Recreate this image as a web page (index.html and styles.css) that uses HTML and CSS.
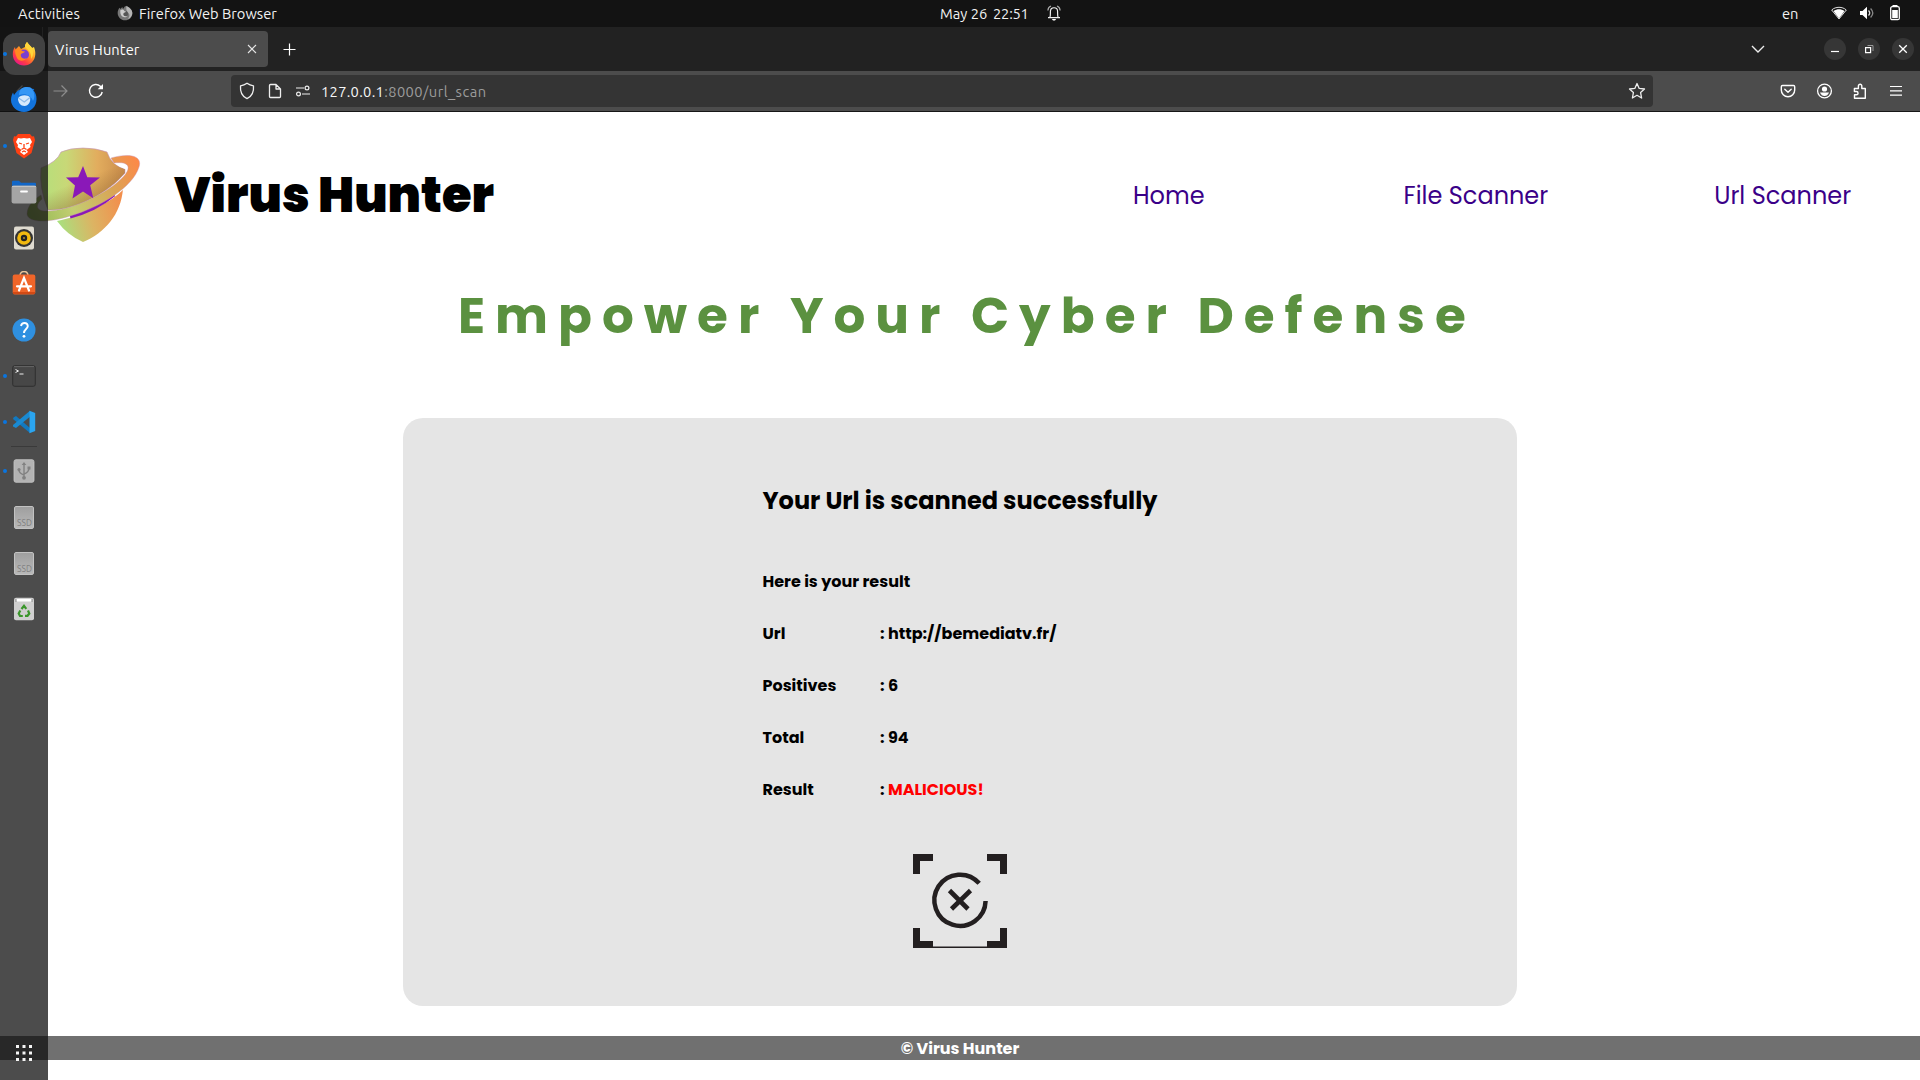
FILE: index.html
```html
<!DOCTYPE html>
<html lang="en">
<head>
<meta charset="utf-8">
<title>Virus Hunter</title>
<link rel="stylesheet" href="styles.css">
</head>
<body>
<div class="screen">
  <header class="topbar">
    <div class="topbar-left">
      <span class="activities">Activities</span>
      <svg class="mono-fox" width="16" height="16" viewBox="0 0 24 24"><path fill="#777" d="M12 2c4 0 10 3 11 10 0 7-5 11-11 11S1 18 1 12c0-3 1-6 3-8l1 2 3-3 1 3z"/><path fill="#b5b5b5" d="M14 1c5 3 9 6 9 11 0 4-3 8-7 9 5-5 2-9-1-10l-1-5z"/><circle cx="12" cy="13" r="4.5" fill="#555"/><path fill="#ccc" d="M5 8c3-2 5-1 6 1l3 1-4 2c-2 4 2 6 6 4-4 5-12 2-11-8z"/></svg>
      <span>Firefox Web Browser</span>
    </div>
    <div class="topbar-clock">
      <span>May 26</span><span>22:51</span>
      <svg width="14" height="16" viewBox="0 0 14 16" fill="none" stroke="#eee" stroke-width="1.2"><path d="M1 12.600H13M2.800 12.400C3.600 11 3.400 9 3.400 6.400C3.400 1.500 10.600 1.500 10.600 6.400C10.600 9 10.400 11 11.200 12.400"/><path d="M4 1C2.200 1.600 1 3.200.9 5.500M10 1C11.800 1.600 13 3.200 13.100 5.500" opacity=".7"/><path d="M4.800 14h4.400l-1.200 1.600H6z" fill="#fff" stroke="none"/></svg>
    </div>
    <div class="topbar-status">
      <span class="lang">en</span>
      <svg width="16" height="14" viewBox="0 0 16 14"><path d="M.7 4C4.500.4 11.500.4 15.300 4L8 13z" fill="none" stroke="#ddd"/><path d="M2.500 5C6 2.800 10 2.800 13.500 5L8 12.400z" fill="#fff"/></svg>
      <svg width="16" height="14" viewBox="0 0 16 14"><path d="M1 5h2.500L8 .8v12.400L3.500 9H1z" fill="#fff"/><path d="M9.500 4.500q2.400 2.500 0 5" fill="none" stroke="#ddd" stroke-width="1.300"/><path d="M11.600 2.500q4.400 4.500 0 9" fill="none" stroke="#888" stroke-width="1.300"/></svg>
      <svg width="12" height="16" viewBox="0 0 12 16"><path d="M3.500 0h5v2h-5z" fill="#fff"/><rect x="1.700" y="1.700" width="8.600" height="13" rx="1.500" fill="none" stroke="#fff" stroke-width="1.300"/><path d="M3.200 5h5.600v8.200H3.200z" fill="#fff"/></svg>
    </div>
  </header>

  <div class="tabbar">
    <svg class="view-icon" width="14" height="12" viewBox="0 0 14 12" fill="none" stroke="#ddd" stroke-width="1.300"><path d="M2 1h10M1 11V5q0-1.500 1.500-1.500h9Q13 3.500 13 5v6z"/></svg>
    <i class="divider"></i>
    <div class="tab">
      <span>Virus Hunter</span>
      <svg width="10" height="10" viewBox="0 0 10 10" stroke="#e5e5e5" stroke-width="1.100"><path d="M1 1l8 8M9 1L1 9"/></svg>
    </div>
    <svg class="plus" width="13" height="13" viewBox="0 0 13 13" stroke="#fff" stroke-width="1.200"><path d="M6.500.500v12M.500 6.500h12"/></svg>
    <svg class="tabs-chevron" width="14" height="8" viewBox="0 0 14 8" fill="none" stroke="#eee" stroke-width="1.400"><path d="M1 1l6 6 6-6"/></svg>
    <div class="window-buttons">
      <span class="wbtn"><svg width="10" height="10" viewBox="0 0 10 10" stroke="#fff" stroke-width="1.200"><path d="M1 7.500h8"/></svg></span>
      <span class="wbtn"><svg width="10" height="10" viewBox="0 0 10 10" fill="none" stroke="#fff" stroke-width="1.200"><path d="M1.600 3.600h5v5h-5z"/><path d="M3.500 1.500h5.500v5.500" stroke="#999" stroke-width="1"/></svg></span>
      <span class="wbtn"><svg width="10" height="10" viewBox="0 0 10 10" stroke="#fff" stroke-width="1.300"><path d="M1.200 1.200l7.600 7.600M8.800 1.200L1.200 8.800"/></svg></span>
    </div>
  </div>

  <div class="toolbar">
    <svg class="back" width="15" height="12" viewBox="0 0 15 12" fill="none" stroke="#ddd" stroke-width="1.200"><path d="M14.500 6H1M6.500.5L1 6l5.500 5.500"/></svg>
    <svg class="forward" width="15" height="12" viewBox="0 0 15 12" fill="none" stroke="#8d8d8d" stroke-width="1.200"><path d="M.5 6H14M8.500.5L14 6l-5.500 5.500"/></svg>
    <svg class="reload" width="16" height="16" viewBox="0 0 16 16" fill="none" stroke="#fff" stroke-width="1.400"><path d="M14.200 9A6.400 6.400 0 1 1 12.300 3.200L14 5"/><path d="M15 1v5.300H9.700z" fill="#fff" stroke="none"/></svg>
    <div class="urlbar">
      <svg width="16" height="18" viewBox="0 0 16 18" fill="none" stroke="#eee" stroke-width="1.300" stroke-linejoin="round"><path d="M8 1.200C5.500 3 3.500 3.500 1.500 3.800 1 10 3 14.500 8 16.600 13 14.500 15 10 14.500 3.800 12.500 3.500 10.500 3 8 1.200z"/></svg>
      <svg class="page-icon" width="14" height="16" viewBox="0 0 14 16" fill="none" stroke="#eee" stroke-width="1.300" stroke-linejoin="round"><path d="M2.500 1.500H8L12.500 6v7.500q0 1-1 1h-9q-1 0-1-1v-11q0-1 1-1zM8 1.500V6h4.500"/></svg>
      <svg class="perm-icon" width="16" height="12" viewBox="0 0 16 12" fill="none" stroke="#eee" stroke-width="1.200"><path d="M1 3h8M7 9h8"/><circle cx="12" cy="3" r="1.900"/><circle cx="3.500" cy="9" r="1.900"/></svg>
      <span class="host">127.0.0.1</span><span class="path">:8000/url_scan</span>
      <svg class="star-icon" width="18" height="18" viewBox="0 0 18 18" fill="none" stroke="#eee" stroke-width="1.300" stroke-linejoin="round"><path d="M9 1.500l2.200 4.900 5.300.6-3.900 3.600 1 5.400L9 13.300 4.400 16l1-5.400L1.500 7l5.300-.6z"/></svg>
    </div>
    <div class="tools">
      <svg width="16" height="16" viewBox="0 0 16 16" fill="none" stroke="#fff" stroke-width="1.400" stroke-linecap="round" stroke-linejoin="round"><path d="M2.500 2.500h11q1.200 0 1.200 1.200V7a6.700 6.700 0 0 1-13.400 0V3.700q0-1.200 1.200-1.200z"/><path d="M4.800 6.200L8 9.200l3.200-3"/></svg>
      <svg width="17" height="16" viewBox="-.5 0 17 16"><circle cx="8" cy="8" r="6.900" fill="none" stroke="#fff" stroke-width="1.300"/><circle cx="8" cy="6" r="2.600" fill="#fff"/><path d="M3.500 9.500h9Q11 13 8 13T3.500 9.500z" fill="#fff"/></svg>
      <svg width="15" height="16" viewBox="1 0 15 16" fill="none" stroke="#fff" stroke-width="1.400" stroke-linejoin="round"><path d="M2.500 15.200h10.800V5.500H9.800V3a1.700 1.700 0 0 0-3.400 0v2.500h-4v3h2a1.600 1.600 0 0 1 0 3.300H2.500z"/></svg>
      <svg width="16" height="16" viewBox="0 0 16 16" stroke="#fff" stroke-width="1.200"><path d="M2 3.500h12M2 7.800h12M2 12.100h12"/></svg>
    </div>
  </div>

  <main class="page">
    <div class="site-header">
      <svg class="logo" width="116" height="98" viewBox="26 146 116 98">
        <defs>
          <linearGradient id="body" x1="40" x2="128" y1="190" y2="190" gradientUnits="userSpaceOnUse"><stop offset="0" stop-color="#b4e07c"/><stop offset=".3" stop-color="#c8d877"/><stop offset=".65" stop-color="#e2ad5e"/><stop offset="1" stop-color="#c98a4a"/></linearGradient>
          <linearGradient id="low" x1="58" y1="222" x2="122" y2="205" gradientUnits="userSpaceOnUse"><stop offset="0" stop-color="#a9e07f"/><stop offset=".5" stop-color="#dcb463"/><stop offset="1" stop-color="#f28f4d"/></linearGradient>
          <linearGradient id="ring" x1="27" y1="218" x2="140" y2="160" gradientUnits="userSpaceOnUse"><stop offset="0" stop-color="#8fb850"/><stop offset=".35" stop-color="#c3ce72"/><stop offset=".7" stop-color="#d9a556"/><stop offset="1" stop-color="#ff8747"/></linearGradient>
          <linearGradient id="shade" x1="75" y1="165" x2="92" y2="207" gradientUnits="userSpaceOnUse"><stop offset=".35" stop-color="#845c2c" stop-opacity="0"/><stop offset="1" stop-color="#845c2c" stop-opacity=".5"/></linearGradient>
        </defs>
        <path d="M57 221C82 216 108 205 123 189C121 214 105 233 83 242Q67 235 57 221z" fill="url(#low)"/>
        <path d="M57 218C82 213 108 203 123 188" fill="none" stroke="#fff" stroke-width="3"/>
        <path d="M70 216.500C86 212.500 102 204.500 114 194.500" fill="none" stroke="#8a18b8" stroke-width="4"/>
        <path d="M83 148Q70 148 61 152Q57 162 41 168Q39 188 48 210C75 211 108 193 125 173L125 169Q111 165 107 152Q96 148 83 148z" fill="url(#body)" stroke="#c590b5" stroke-width=".6"/>
        <path d="M83 148Q70 148 61 152Q57 162 41 168Q39 188 48 210C75 211 108 193 125 173L125 169Q111 165 107 152Q96 148 83 148z" fill="url(#shade)"/>
        <path d="M114 163C122 161 130 162 128 167L125 174Q127 169 125 169Q119 167 114 163z" fill="#fff"/>
        <path d="M111 158C128 153 143 155 139 167C133 187 101 207 70 216C48 223 28 223 27 214C27 206 34 199 41 195L42 199C35 205 36 211 46 211C72 211 110 192 124 176C131 168 130 161 114 163z" fill="url(#ring)" stroke="#c590b5" stroke-width=".4"/>
        <path d="M83 166l4.300 11.300 12.700.3-9.800 7.700 3.100 13-10.300-6.800-10.500 7 2.500-13-9-7.900 12.200-.3z" fill="#8a18b8"/>
      </svg>
      <h1 class="brand">Virus Hunter</h1>
      <nav class="nav"><a>Home</a><a>File Scanner</a><a>Url Scanner</a></nav>
    </div>
    <h2 class="slogan">Empower Your Cyber Defense</h2>
    <section class="card">
      <div class="result">
        <h3>Your Url is scanned successfully</h3>
        <p>Here is your result</p>
        <dl>
          <dt>Url</dt><dd>: http://bemediatv.fr/</dd>
          <dt>Positives</dt><dd>: 6</dd>
          <dt>Total</dt><dd>: 94</dd>
          <dt>Result</dt><dd>: <span class="verdict">MALICIOUS!</span></dd>
        </dl>
      </div>
      <svg class="scan-icon" width="94" height="94" viewBox="0 0 94 94" fill="none" stroke="#231f20"><path d="M3.500 20V3.500H20M74 3.500h16.500V20M3.500 74v16.500H20M74 90.500h16.500V74" stroke-width="7"/><path d="M20 93.300h54" stroke-width="1.400"/><path d="M66.200 29.300A25.600 25.600 0 1 0 72.600 47" stroke-width="4.500"/><path d="M36.500 36.500L55 55M57.500 36.500L38.500 55" stroke-width="4.600"/></svg>
    </section>
    <footer class="site-footer">© Virus Hunter</footer>
  </main>

  <aside class="dock">
    <div class="slot active running"><svg width="24" height="24" viewBox="0 0 24 24"><defs><linearGradient id="ff" x1="20" y1="2" x2="5" y2="22" gradientUnits="userSpaceOnUse"><stop offset="0" stop-color="#fff04a"/><stop offset=".4" stop-color="#ff9a1f"/><stop offset=".75" stop-color="#ff3b44"/><stop offset="1" stop-color="#e8168a"/></linearGradient></defs><path d="M15 0c2 3 4 4 5 6l2-1c1 3 1.500 5 1.300 7.500C23 19 18 23.500 12 23.500S.8 19 .8 12.500C.8 9 1.500 7 3 5l.5 2.500L7 4l2 3 4-2c0-2 .7-3.500 2-5z" fill="url(#ff)"/><circle cx="12" cy="12.500" r="5" fill="#7b3fd0"/><path d="M3 8c3-3 6-1 7 1l3 .5c-1 1.500-3 1.500-4 2.500-1 3 2 6 6 4-2 3-8 4-10 0-1-2-2-5-2-8z" fill="#ff8a20"/><path d="M15 0c2 3 4 4 5 6 2 4 1 9-1 11 1-5-2-9-6-12 0-2 .7-3.500 2-5z" fill="#ffd63a"/></svg></div>
    <div class="slot raised"><svg width="26" height="26" viewBox="0 0 26 26"><path d="M10 3c4-3 10-2 11 0 1-.5 2 0 2.500.5-.5 0-1 .5-1 1 2 2 3 5 3 8.500C25.500 20.500 20 26 13 26S0 20.500 0 14C0 11 1 8 2 6.500L3 9c2-3 4-5 7-6z" fill="#1273dc"/><path d="M10 3c4-3 10-2 11 0 3 4 3 9 1 12C20 9 14 7 8 9c0-2 .5-4 2-6z" fill="#3597f5"/><path d="M7 12.500c2-4 10-4 12-1 1 4-1.500 8.500-5.500 8.500S7 16.500 7 12.500z" fill="#d6e9fc"/><path d="M7.500 12l5.800 4 5.700-4.500" fill="none" stroke="#8fbbe8" stroke-width="1.300"/></svg></div>
    <div class="slot running"><svg width="24" height="26" viewBox="0 0 24 26"><path d="M6 1h12l2 2.500 2-.3L23 7l-1 4-2.500 9L12 25.500 4.500 20 2 11 1 7l1-3.800 2 .3z" fill="#ff4013"/><path d="M12 5l3 .5L18 5l2 4-2 3 .5 2-4 3 1.500 2-4 3-4-3 1.500-2-4-3 .5-2-2-3 2-4 3 .5z" fill="#fff"/><path d="M7 10l3 1M17 10l-3 1M12 11v4M9.500 16.500L12 15l2.500 1.500M10 19l2-1 2 1" stroke="#ff4013" stroke-width="1.300" fill="none"/></svg></div>
    <div class="slot"><svg width="26" height="24" viewBox="0 0 26 24"><path d="M1 2Q1 .8 2 .8h6l2 2h14q1 0 1 1V9H1z" fill="#1267c8"/><rect x=".6" y="5.500" width="24.800" height="18" rx="2" fill="#a5a5a5"/><path d="M1 6.500h24" stroke="#c4c4c4"/><path d="M10 11.500h6" stroke="#fff" stroke-width="1.800" stroke-linecap="round"/></svg></div>
    <div class="slot"><svg width="22" height="24" viewBox="0 0 22 24"><rect x="1" y=".5" width="20" height="23" rx="2" fill="#dfdbd0"/><circle cx="11" cy="12" r="9" fill="#333"/><circle cx="11" cy="12" r="6.800" fill="#f2b90f"/><circle cx="11" cy="12" r="3.200" fill="#222"/><circle cx="11" cy="12" r="1.100" fill="#a58a30"/></svg></div>
    <div class="slot raised"><svg width="24" height="24" viewBox="0 0 24 24"><path d="M8 5q0-4.500 4-4.500T16 5" fill="none" stroke="#e9c49a" stroke-width="1.400"/><rect x=".7" y="3.500" width="22.600" height="20" rx="2" fill="#f06529"/><path d="M1 22h22" stroke="#c9420f" stroke-width="1.500"/><path d="M7 19.500L12 7l5 12.500M5 15.300h14" stroke="#fff" stroke-width="2.200" stroke-linecap="round" fill="none"/></svg></div>
    <div class="slot"><svg width="24" height="24" viewBox="0 0 24 24"><circle cx="12" cy="12" r="11.500" fill="#2f90e0"/><path d="M9 8q.5-3 3.500-3t3.300 3c0 3-3.800 3-3.800 7" fill="none" stroke="#fff" stroke-width="1.900"/><circle cx="12" cy="18.300" r="1.400" fill="#fff"/></svg></div>
    <div class="slot running"><svg width="24" height="22" viewBox="0 0 24 22"><rect x=".7" y=".7" width="22.600" height="20.600" rx="2" fill="#474747" stroke="#2f2f2f"/><path d="M2 1.600h20" stroke="#666"/><path d="M3.500 4.500l3 1.500-3 1.500M7.500 9h4" fill="none" stroke="#eee"/></svg></div>
    <div class="slot running"><svg width="24" height="24" viewBox="0 0 24 24"><path d="M1.500 7.500L4 6l14 12v5L1 9z" fill="#1279c0"/><path d="M1 15L18 .8v6L4 18l-3-1.500z" fill="#1a8ad2"/><path d="M17.500.7L23.200 3v18l-5.700 2.300z" fill="#2ba5f0"/></svg></div>
    <i class="dock-sep"></i>
    <div class="slot running"><svg width="22" height="24" viewBox="0 0 22 24"><rect x="1" y=".7" width="20" height="22.600" rx="2" fill="#b3b3b3" stroke="#c6c6c6" stroke-width=".8"/><g fill="none" stroke="#818181" stroke-width="1.400"><path d="M11 5v14M11 16c-3-1-5-2-5-5M11 15c3-1 5-2 5-6"/></g><path d="M11 3l2.300 3H8.700zM14.500 7.500h3v3h-3z" fill="#818181"/><circle cx="6" cy="10.500" r="1.600" fill="#818181"/><circle cx="11" cy="18.800" r="1.900" fill="#818181"/></svg></div>
    <div class="slot"><div class="ssd">SSD</div></div>
    <div class="slot"><div class="ssd">SSD</div></div>
    <div class="slot"><svg width="22" height="24" viewBox="0 0 22 24"><rect x="1" y=".7" width="20" height="22.600" rx="2" fill="#cfcfcf"/><path d="M3 2h16v2.500H3z" fill="#fff"/><path d="M3 2v3M19 2v3" stroke="#888"/><g fill="none" stroke="#3a962b" stroke-width="2.200"><path d="M8.500 12L11 8.800l2.300 3M15 13.500l1.300 3-1.800 2.300H12M9.800 19H7l-1.300-2.500L7.300 13.500"/></g></svg></div>
    <svg class="apps" width="18" height="18" viewBox="0 0 18 18" fill="#f4f4f4"><path d="M1 1h3v3H1zM7.500 1h3v3h-3zM14 1h3v3h-3zM1 7.500h3v3H1zM7.500 7.500h3v3h-3zM14 7.500h3v3h-3zM1 14h3v3H1zM7.500 14h3v3h-3zM14 14h3v3h-3z"/></svg>
  </aside>
</div>
</body>
</html>
```
FILE: styles.css
```css
* { box-sizing: border-box; }
body { margin: 0; }
h1, h2, h3, p, dl, dd { margin: 0; }
svg { display: block; flex: none; }

.screen {
  position: relative;
  width: 1920px;
  height: 1080px;
  overflow: hidden;
  display: flex;
  flex-direction: column;
  background: #fff;
  color: #fff;
  font: 14.67px/18px Ubuntu, "Noto Sans", sans-serif;
  white-space: nowrap;
}

/* desktop top bar */
.topbar {
  height: 27px;
  flex: none;
  background: #131313;
  color: #f2f2f2;
  display: grid;
  grid-template-columns: 940px 1fr auto;
  align-items: center;
  padding-bottom: 1px;
}
.topbar span { padding-top: 1px; }
.topbar-left { display: flex; align-items: center; padding-left: 18px; }
.activities { width: 99px; letter-spacing: .2px; }
.mono-fox { margin-right: 6px; }
.topbar-clock { display: flex; align-items: center; }
.topbar-clock span { width: 53px; }
.topbar-clock span + span { width: 54px; letter-spacing: -.2px; }
.topbar-status { display: flex; align-items: center; padding-right: 19px; }
.lang { width: 49px; }
.topbar-status svg { margin-right: 12px; }
.topbar-status svg:nth-of-type(2) { margin-right: 14px; }
.topbar-status svg:last-child { margin: 0; }

/* browser tabs */
.tabbar {
  height: 44px;
  flex: none;
  background: #222;
  display: flex;
  align-items: center;
  padding: 0 6px 0 13px;
}
.divider { width: 1px; height: 44px; background: #555; margin: 0 5px 0 15px; }
.tab {
  width: 220px;
  height: 36px;
  border-radius: 4px;
  background: #4c4c4c;
  display: flex;
  align-items: center;
  justify-content: space-between;
  padding: 0 11px 0 7px;
}
.tab span { padding-top: 2px; letter-spacing: .1px; }
.plus { margin-left: 15px; }
.tabs-chevron { margin-left: auto; }
.window-buttons { display: flex; gap: 12px; margin-left: 59px; }
.wbtn {
  width: 22px;
  height: 22px;
  border-radius: 50%;
  background: #363636;
  display: grid;
  place-items: center;
}

/* address row */
.toolbar {
  height: 41px;
  flex: none;
  background: #4c4c4c;
  border-bottom: 1px solid #161616;
  display: flex;
  align-items: center;
}
.back { margin-left: 16px; }
.forward { margin-left: 22px; }
.reload { margin-left: 20px; }
.urlbar {
  width: 1422px;
  height: 32px;
  margin-left: 127px;
  border-radius: 4px;
  background: #343434;
  display: flex;
  align-items: center;
  padding: 0 7px 0 8px;
}
.page-icon { margin-left: 13px; }
.perm-icon { margin: 0 10px 0 13px; }
.host { color: #f7f7f7; letter-spacing: .3px; }
.path { color: #9c9c9c; letter-spacing: .45px; }
.host, .path { padding-top: 2px; }
.star-icon { margin-left: auto; }
.tools { display: flex; gap: 20px; margin-left: 127px; }

/* website */
.page {
  flex: 1;
  display: flex;
  flex-direction: column;
  font-family: Poppins, Inter, sans-serif;
  color: #000;
}
.site-header {
  display: flex;
  align-items: center;
  height: 98px;
  margin-top: 34px;
  padding-left: 26px;
}
.brand { margin: 0 0 0 32px; padding-top: 2px; font-size: 48px; line-height: 72px; font-weight: 900; width: 320px; }
.nav { display: flex; padding-top: 2px; margin-left: 639px; font-size: 24px; line-height: 36px; color: #3a0088; }
.nav a + a { margin-left: 199px; }
.nav a:last-child { margin-left: 166px; }
.slogan {
  margin-top: 36px;
  padding-left: 458px;
  font-size: 50px;
  line-height: 72px;
  font-weight: 700;
  letter-spacing: 10px;
  color: #5b9140;
}
.card {
  width: 1114px;
  height: 588px;
  margin: 66px 0 0 403px;
  border-radius: 20px;
  background: #e5e5e5;
  display: flex;
  flex-direction: column;
  align-items: center;
  padding-top: 65px;
}
.result { width: 395px; font-size: 16px; line-height: 24px; font-weight: 700; }
.result h3 { font-size: 24px; line-height: 36px; }
.result p { margin-top: 51px; }
.result dl { display: grid; grid-template-columns: 117.5px auto; row-gap: 28px; margin-top: 28px; }
.verdict { color: #f00; }
.scan-icon { margin-top: 52px; }
.site-footer {
  height: 24px;
  margin-top: 30px;
  background: #707070;
  color: #fff;
  text-align: center;
  font-size: 16px;
  line-height: 26px;
  font-weight: 700;
}

/* dock floats over the browser window */
.dock {
  position: absolute;
  left: 0;
  top: 27px;
  bottom: 0;
  width: 48px;
  background: rgba(16, 16, 16, .75);
  display: flex;
  flex-direction: column;
  align-items: center;
  padding: 4px 0 18px;
}
.slot { position: relative; width: 48px; height: 46px; display: grid; place-items: center; }
.raised { padding-bottom: 2px; }
.active::after {
  content: "";
  position: absolute;
  inset: 2px 3px;
  border-radius: 12px;
  background: #424242;
}
.active svg { position: relative; z-index: 1; }
.running::before {
  content: "";
  position: absolute;
  left: 3px;
  top: 21px;
  width: 4px;
  height: 4px;
  border-radius: 50%;
  background: #0a75e0;
  z-index: 1;
}
.dock-sep { width: 26px; height: 1px; margin: 1px 0; background: #3a3a3a; }
.ssd {
  width: 20px;
  height: 23px;
  border-radius: 2px;
  background: linear-gradient(#9f9f9f, #b8b8b8);
  border: 1px solid #c2c2c2;
  color: #7f7f7f;
  font-size: 8.5px;
  line-height: 9px;
  padding: 12px 0 0 2px;
}
.apps { margin-top: auto; }
```
